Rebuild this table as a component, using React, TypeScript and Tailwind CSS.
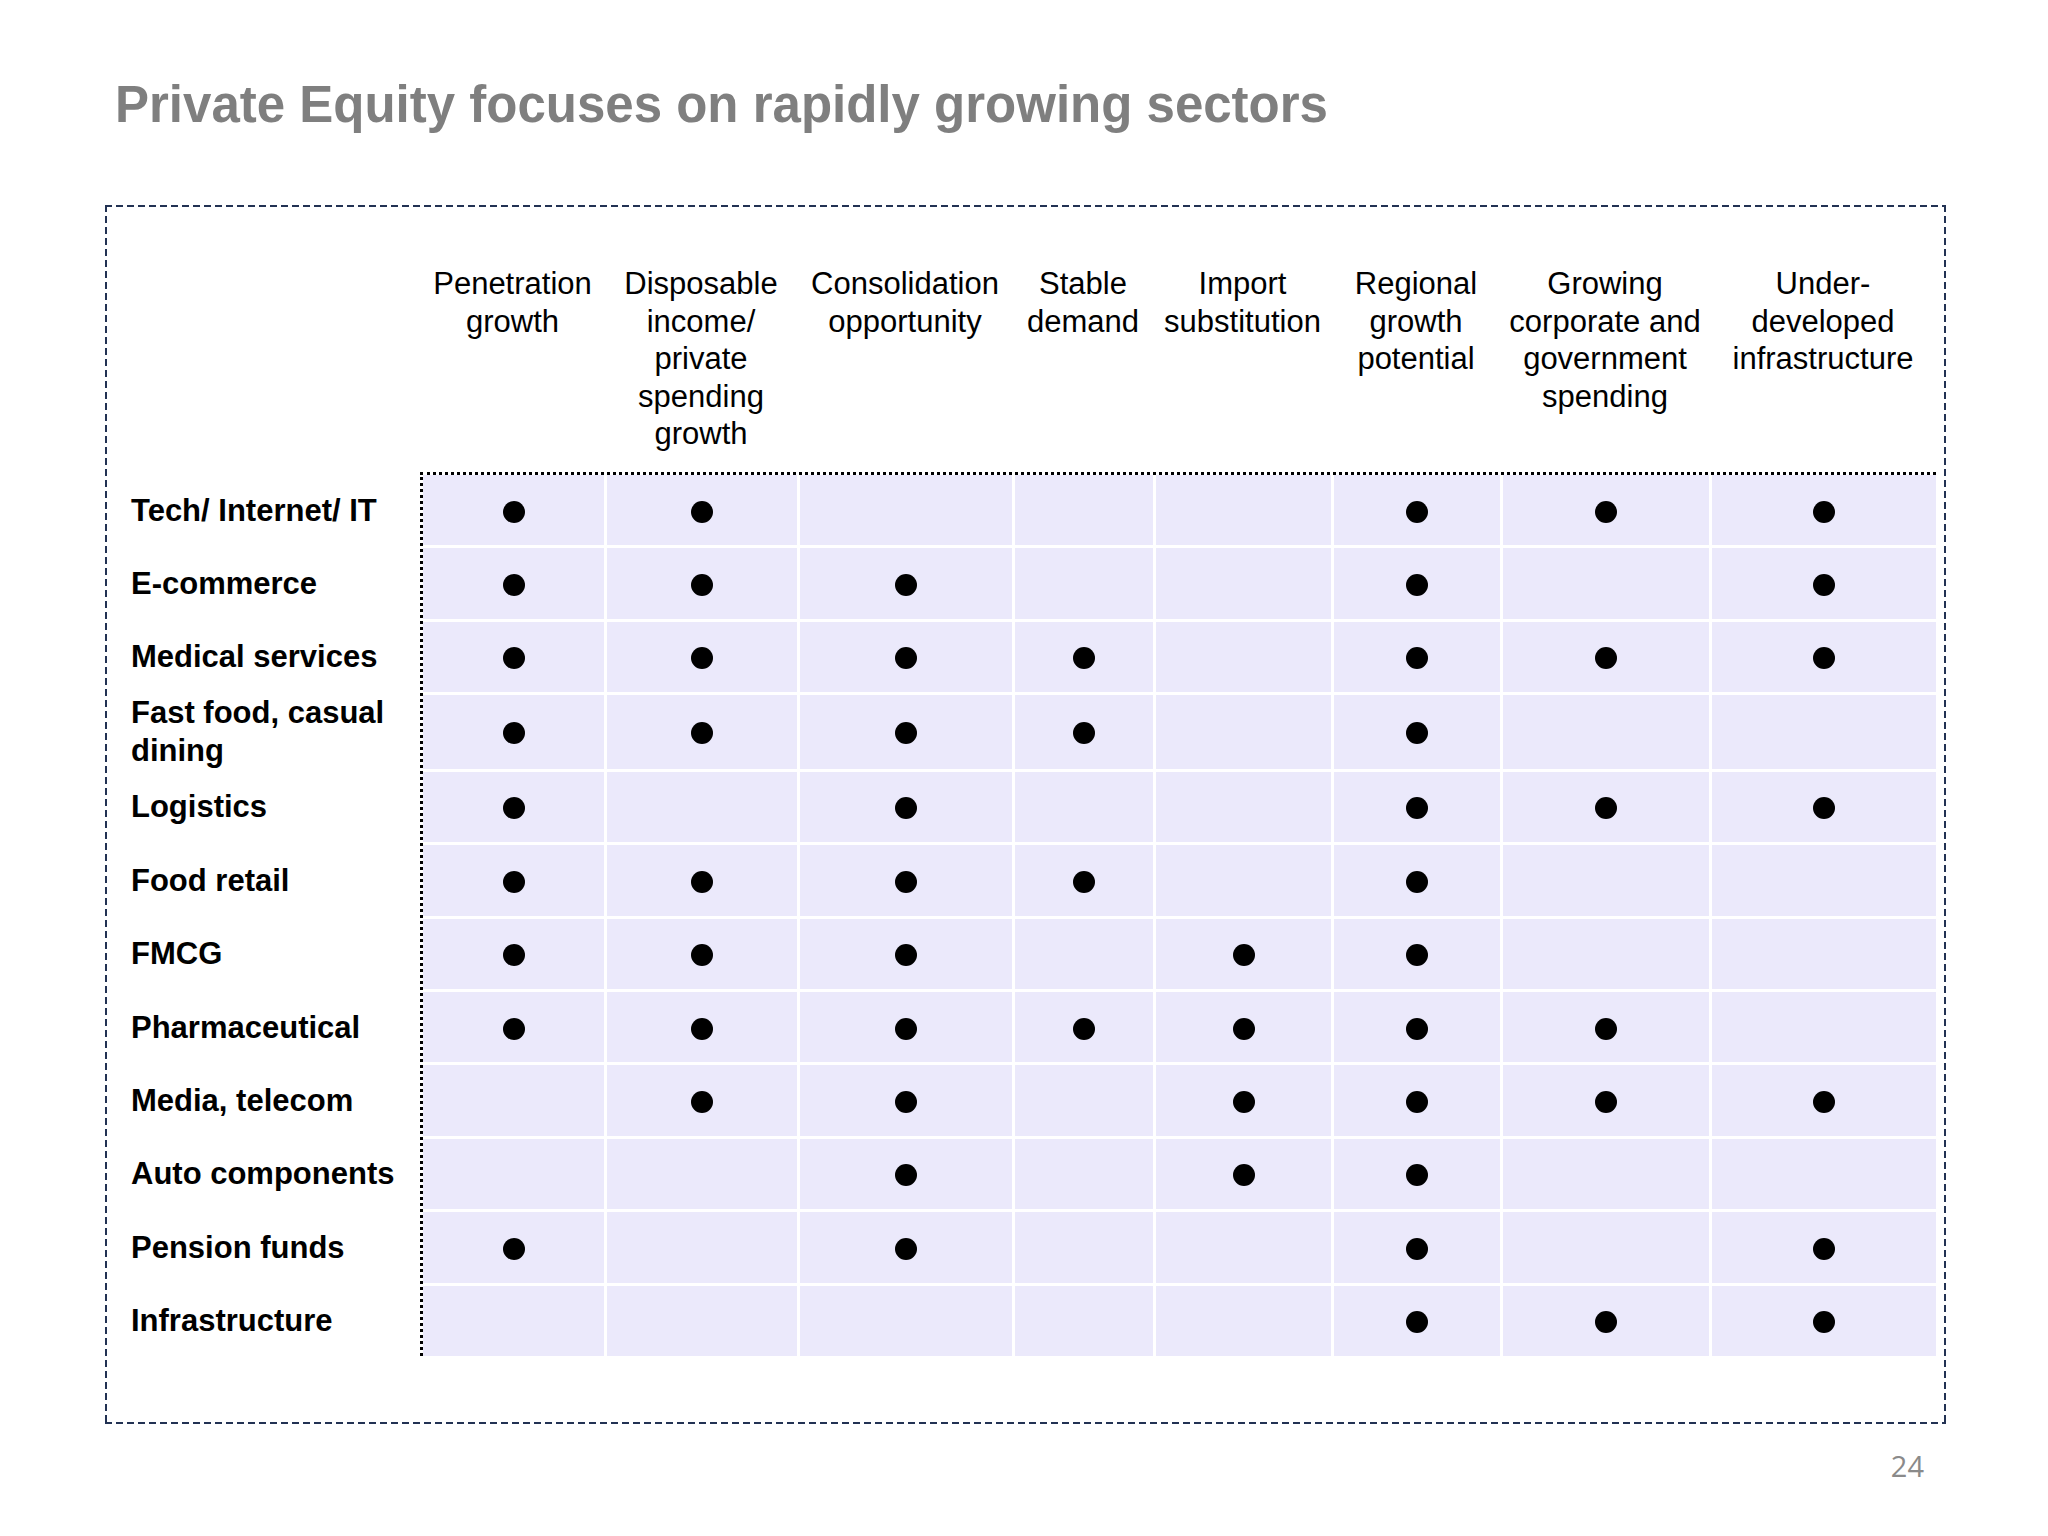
import React from "react";

// Column headings, one entry per line
const columns: { lines: string[] }[] = [
  { lines: ["Penetration", "growth"] },
  { lines: ["Disposable", "income/", "private", "spending", "growth"] },
  { lines: ["Consolidation", "opportunity"] },
  { lines: ["Stable", "demand"] },
  { lines: ["Import", "substitution"] },
  { lines: ["Regional", "growth", "potential"] },
  { lines: ["Growing", "corporate and", "government", "spending"] },
  { lines: ["Under-", "developed", "infrastructure"] },
];

// 1 = dot, 0 = empty
const sectors: { label: string[]; marks: number[]; tall?: boolean }[] = [
  { label: ["Tech/ Internet/ IT"], marks: [1, 1, 0, 0, 0, 1, 1, 1] },
  { label: ["E-commerce"], marks: [1, 1, 1, 0, 0, 1, 0, 1] },
  { label: ["Medical services"], marks: [1, 1, 1, 1, 0, 1, 1, 1] },
  { label: ["Fast food, casual", "dining"], marks: [1, 1, 1, 1, 0, 1, 0, 0], tall: true },
  { label: ["Logistics"], marks: [1, 0, 1, 0, 0, 1, 1, 1] },
  { label: ["Food retail"], marks: [1, 1, 1, 1, 0, 1, 0, 0] },
  { label: ["FMCG"], marks: [1, 1, 1, 0, 1, 1, 0, 0] },
  { label: ["Pharmaceutical"], marks: [1, 1, 1, 1, 1, 1, 1, 0] },
  { label: ["Media, telecom"], marks: [0, 1, 1, 0, 1, 1, 1, 1] },
  { label: ["Auto components"], marks: [0, 0, 1, 0, 1, 1, 0, 0] },
  { label: ["Pension funds"], marks: [1, 0, 1, 0, 0, 1, 0, 1] },
  { label: ["Infrastructure"], marks: [0, 0, 0, 0, 0, 1, 1, 1] },
];

const gridCols =
  "grid grid-cols-[181px_190px_212px_138px_175px_166px_206px_224px] gap-x-[3px]";

const Dot: React.FC = () => (
  <span className="block h-[22px] w-[22px] rounded-full bg-black" />
);

const App: React.FC = () => {
  return (
    <div
      className="relative h-[1536px] w-[2048px] overflow-hidden bg-white"
      style={{ fontFamily: '"Liberation Sans", Arial, sans-serif' }}
    >
      {/* Title */}
      <h1 className="pl-[115px] pt-[79px] text-[51px] font-bold leading-none text-[#7f7f7f]">
        Private Equity focuses on rapidly growing sectors
      </h1>

      {/* Dashed frame, drawn with gradients for longer dashes */}
      <div className="ml-[105px] mt-[75px] h-[1219px] w-[1841px] bg-no-repeat pt-[60px] [background-image:repeating-linear-gradient(90deg,#223253_0_7px,transparent_7px_11px),repeating-linear-gradient(90deg,#223253_0_7px,transparent_7px_11px),repeating-linear-gradient(180deg,#223253_0_7px,transparent_7px_11px),repeating-linear-gradient(180deg,#223253_0_7px,transparent_7px_11px)] [background-position:0_0,0_100%,0_0,100%_0] [background-size:100%_2px,100%_2px,2px_100%,2px_100%]">
        {/* Header row */}
        <div className="flex h-[207px]">
          <div className="w-[317px] shrink-0" />
          <div className={gridCols}>
            {columns.map((c, i) => (
              <div
                key={i}
                className="whitespace-nowrap text-center text-[31px] leading-[37.5px] text-black"
              >
                {c.lines.map((l, j) => (
                  <div key={j}>{l}</div>
                ))}
              </div>
            ))}
          </div>
        </div>

        {/* Body */}
        <div className="flex">
          {/* Row labels */}
          <div className="flex w-[315px] shrink-0 flex-col gap-y-[3px] pl-[26px] pt-[2px]">
            {sectors.map((s, i) => (
              <div
                key={i}
                className={`flex items-center pt-[3px] text-[31px] font-bold leading-[38px] text-black ${
                  s.tall ? "h-[73.6px]" : "h-[70.4px]"
                }`}
              >
                <div className="whitespace-nowrap">
                  {s.label.map((l, j) => (
                    <div key={j}>{l}</div>
                  ))}
                </div>
              </div>
            ))}
          </div>

          {/* Matrix */}
          <div className="flex flex-col gap-y-[3px] border-l-[3px] border-t-[3px] border-dotted border-black">
            {sectors.map((s, i) => (
              <div key={i} className={gridCols}>
                {s.marks.map((m, j) => (
                  <div
                    key={j}
                    className={`flex items-center justify-center bg-[#ebe9fb] pt-[3px] ${
                      s.tall ? "h-[73.6px]" : "h-[70.4px]"
                    }`}
                  >
                    {m === 1 && <Dot />}
                  </div>
                ))}
              </div>
            ))}
          </div>
        </div>
      </div>

      {/* Page number */}
      <div className="mt-[27px] flex justify-end pr-[124px]">
        <span
          className="text-[29px] leading-none text-[#8a8a8a]"
          style={{ fontFamily: '"Open Sans", sans-serif' }}
        >
          24
        </span>
      </div>
    </div>
  );
};

export default App;
